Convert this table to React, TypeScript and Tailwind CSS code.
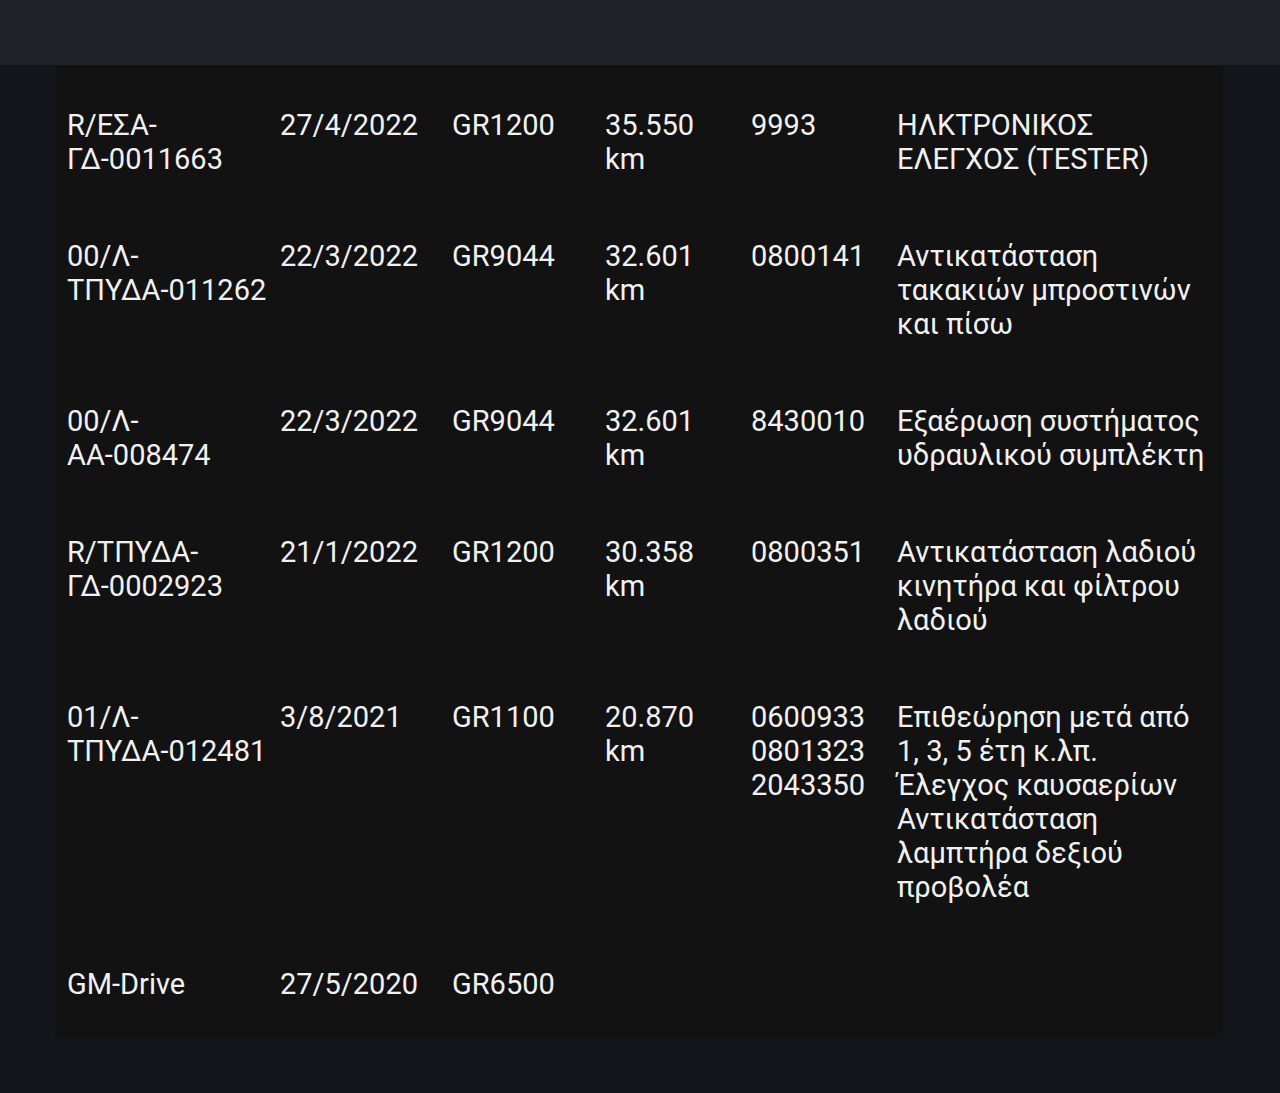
import React from 'react';

const rows = [
  { code: 'R/ΕΣΑ-ΓΔ-0011663', date: '27/4/2022', dealer: 'GR1200', km: '35.550 km', ops: ['9993'], desc: 'ΗΛΚΤΡΟΝΙΚΟΣ ΕΛΕΓΧΟΣ (TESTER)' },
  { code: '00/Λ-ΤΠΥΔΑ-011262', date: '22/3/2022', dealer: 'GR9044', km: '32.601 km', ops: ['0800141'], desc: 'Αντικατάσταση τακακιών μπροστινών και πίσω' },
  { code: '00/Λ-ΑΑ-008474', date: '22/3/2022', dealer: 'GR9044', km: '32.601 km', ops: ['8430010'], desc: 'Εξαέρωση συστήματος υδραυλικού συμπλέκτη' },
  { code: 'R/ΤΠΥΔΑ-ΓΔ-0002923', date: '21/1/2022', dealer: 'GR1200', km: '30.358 km', ops: ['0800351'], desc: 'Αντικατάσταση λαδιού κινητήρα και φίλτρου λαδιού' },
  {
    code: '01/Λ-ΤΠΥΔΑ-012481',
    date: '3/8/2021',
    dealer: 'GR1100',
    km: '20.870 km',
    ops: ['0600933', '0801323', '2043350'],
    desc: ['Επιθεώρηση μετά από 1, 3, 5 έτη κ.λπ.', 'Έλεγχος καυσαερίων', 'Αντικατάσταση λαμπτήρα δεξιού προβολέα'],
  },
  { code: 'GM-Drive', date: '27/5/2020', dealer: 'GR6500', km: '', ops: [], desc: '' },
];

// splits the code after the first hyphen so it wraps like the original
const CodeCell = ({ code }: { code: string }) => {
  const i = code.indexOf('-');
  if (i < 0 || code === 'GM-Drive') return <span>{code}</span>;
  return (
    <span>
      {code.slice(0, i + 1)}
      <br />
      {code.slice(i + 1)}
    </span>
  );
};

const App = () => {
  return (
    <div className="min-h-[1093px] bg-[#14151a] text-[#f1f1f1] font-['Roboto','Noto_Sans',sans-serif]">
      {/* Top bar */}
      <div className="h-[65px] bg-[#1f2126]" />

      {/* Service history table */}
      <div className="ml-[55px] w-[1168px] bg-[#121212] pt-[12px] pb-[5px] pl-[12px] text-[29px] leading-[34px]">
        {rows.map((row, index) => (
          <div key={index} className="grid grid-cols-[213px_172px_153px_146px_146px_312px] pt-[31px] pb-[32px]">
            <div>
              <CodeCell code={row.code} />
            </div>
            <div>{row.date}</div>
            <div>{row.dealer}</div>
            <div className="pr-4">{row.km}</div>
            <div>
              {row.ops.map((op) => (
                <div key={op}>{op}</div>
              ))}
            </div>
            <div>
              {Array.isArray(row.desc)
                ? row.desc.map((d) => <div key={d}>{d}</div>)
                : row.desc}
            </div>
          </div>
        ))}
      </div>
    </div>
  );
};

export default App;
